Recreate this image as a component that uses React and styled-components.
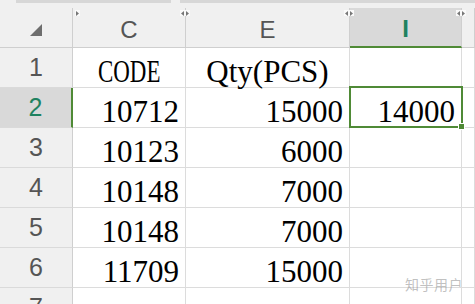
import styled, { createGlobalStyle, css } from 'styled-components';

const GREEN = '#4f8a36';
const TEAL = '#1f8260';

const GlobalStyle = createGlobalStyle`
  html, body {
    margin: 0;
    padding: 0;
    background: #ffffff;
    overflow: hidden;
  }
`;

const columns = [
  { key: 'C', width: 113 },
  { key: 'E', width: 164 },
  { key: 'I', width: 112, selected: true },
  { key: '', width: 13 },
];

const rows = [
  { n: 1, cells: [{ text: 'CODE', center: true, narrow: true }, { text: 'Qty(PCS)', center: true }, {}, {}] },
  { n: 2, selected: true, cells: [{ text: '10712' }, { text: '15000' }, { text: '14000', active: true }, {}] },
  { n: 3, cells: [{ text: '10123' }, { text: '6000' }, {}, {}] },
  { n: 4, cells: [{ text: '10148' }, { text: '7000' }, {}, {}] },
  { n: 5, cells: [{ text: '10148' }, { text: '7000' }, {}, {}] },
  { n: 6, cells: [{ text: '11709' }, { text: '15000' }, {}, {}] },
  { n: 7, cells: [{}, {}, {}, {}] },
];

const Sheet = styled.div`
  position: relative;
  width: 475px;
  height: 304px;
  overflow: hidden;
  background: #fff;
`;

const TopStrip = styled.div`
  height: 8px;
  background: #f0f0f0;
  display: flex;
  gap: 9px;
  padding-left: 16px;
`;

const StripBar = styled.div`
  height: 3px;
  background: #d7d7d7;
  width: ${(p) => p.$w}px;
  flex: ${(p) => (p.$grow ? 1 : 'none')};
`;

const Grid = styled.div`
  display: grid;
  grid-template-columns: 73px ${columns.map((c) => `${c.width}px`).join(' ')};
  grid-auto-rows: 40px;
`;

const Corner = styled.div`
  background: #f0f0f0;
  border-right: 1px solid #cfcfcf;
  border-bottom: 1px solid #cfcfcf;
  box-sizing: border-box;
  display: flex;
  align-items: center;
  justify-content: center;
`;

const ColHead = styled.div`
  box-sizing: border-box;
  background: ${(p) => (p.$selected ? '#d9d9d9' : '#f0f0f0')};
  border-right: 1px solid #cfcfcf;
  border-bottom: ${(p) => (p.$selected ? `2px solid ${GREEN}` : '1px solid #cfcfcf')};
  display: flex;
  align-items: center;
  justify-content: center;
  padding-top: 4px;
  font-family: 'Liberation Sans', Arial, sans-serif;
  font-size: 24px;
  color: ${(p) => (p.$selected ? TEAL : '#555')};
  font-weight: ${(p) => (p.$selected ? 700 : 400)};
`;

const RowHead = styled.div`
  box-sizing: border-box;
  background: ${(p) => (p.$selected ? '#d9d9d9' : '#f0f0f0')};
  border-right: ${(p) => (p.$selected ? `2px solid ${GREEN}` : '1px solid #cfcfcf')};
  border-bottom: 1px solid #dadada;
  display: flex;
  align-items: center;
  justify-content: center;
  font-family: 'Liberation Sans', Arial, sans-serif;
  font-size: 25px;
  color: ${(p) => (p.$selected ? TEAL : '#555')};
`;

const Cell = styled.div`
  position: relative;
  box-sizing: border-box;
  border-right: 1px solid #dcdcdc;
  border-bottom: 1px solid #dcdcdc;
  padding: 8px 6px 0 6px;
  font-family: 'Liberation Serif', 'Times New Roman', serif;
  font-size: 31px;
  line-height: 31px;
  color: #000;
  text-align: ${(p) => (p.$center ? 'center' : 'right')};
  white-space: nowrap;

  ${(p) =>
    p.$active &&
    css`
      &::after {
        content: '';
        position: absolute;
        left: -1px;
        top: -2px;
        right: -2px;
        bottom: -1px;
        border: 2px solid ${GREEN};
        pointer-events: none;
      }
      &::before {
        content: '';
        position: absolute;
        right: -4px;
        bottom: -3px;
        width: 5px;
        height: 5px;
        background: ${GREEN};
        border: 1px solid #fff;
        z-index: 2;
      }
    `}
`;

const Narrow = styled.span`
  display: inline-block;
  transform: scaleX(0.74);
`;

const Resizer = styled.div`
  position: absolute;
  top: 10px;
  left: ${(p) => p.$left}px;
  height: 6px;
  display: flex;
  gap: 2px;
  padding: 0 1px;
  background: #fafafa;
  align-items: center;
`;

const Watermark = styled.div`
  position: absolute;
  right: 12px;
  bottom: 10px;
  font-family: 'Noto Sans CJK SC', sans-serif;
  font-size: 14px;
  letter-spacing: 0.5px;
  color: rgba(140, 140, 140, 0.55);
`;

const Tri = ({ dir }) => (
  <svg width="3" height="5" viewBox="0 0 3 5">
    <path d={dir === 'left' ? 'M3 0 L0 2.5 L3 5 Z' : 'M0 0 L3 2.5 L0 5 Z'} fill="#777" />
  </svg>
);

const CornerMark = () => (
  <svg width="14" height="14" viewBox="0 0 14 14" style={{ marginTop: 4 }}>
    <path d="M13 1 L13 13 L1 13 Z" fill="#6e6e6e" />
  </svg>
);

export default function App() {
  return (
    <>
      <GlobalStyle />
      <Sheet>
        <TopStrip>
          <StripBar $w={155} />
          <StripBar $grow />
        </TopStrip>
        <Grid>
          <Corner>
            <CornerMark />
          </Corner>
          {columns.map((c) => (
            <ColHead key={c.key || 'x'} $selected={c.selected}>
              {c.key}
            </ColHead>
          ))}
          {rows.map((r) => (
            <Row key={r.n} row={r} />
          ))}
        </Grid>
        <Resizer $left={75}>
          <Tri dir="right" />
        </Resizer>
        <Resizer $left={180}>
          <Tri dir="left" />
          <Tri dir="right" />
        </Resizer>
        <Resizer $left={344}>
          <Tri dir="left" />
          <Tri dir="right" />
        </Resizer>
        <Resizer $left={456}>
          <Tri dir="left" />
          <Tri dir="right" />
        </Resizer>
        <Watermark>知乎用户</Watermark>
      </Sheet>
    </>
  );
}

function Row({ row }) {
  return (
    <>
      <RowHead $selected={row.selected}>{row.n}</RowHead>
      {row.cells.map((c, i) => (
        <Cell key={i} $center={c.center} $active={c.active}>
          {c.narrow ? <Narrow>{c.text}</Narrow> : c.text}
        </Cell>
      ))}
    </>
  );
}
